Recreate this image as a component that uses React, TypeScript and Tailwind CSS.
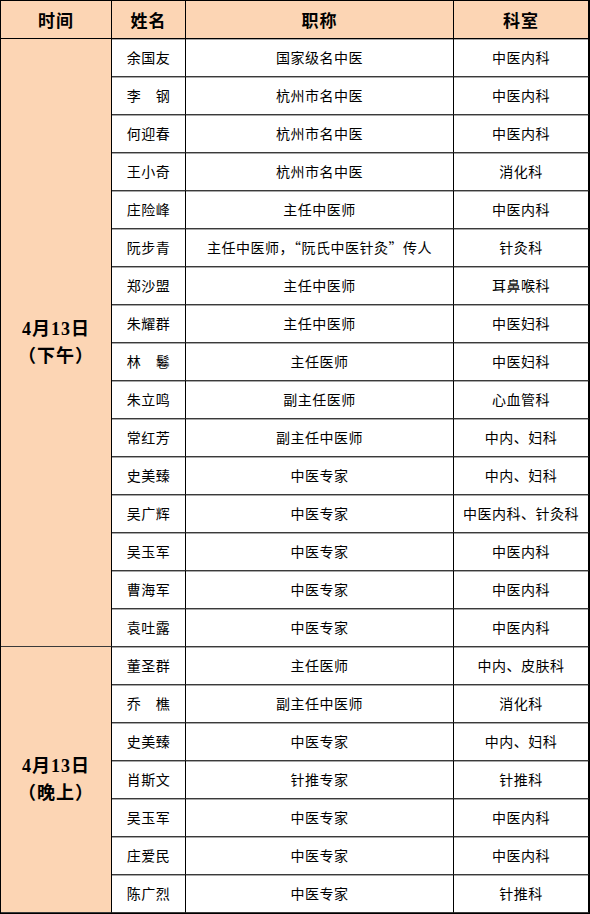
const afternoon = [
  ['余国友', '国家级名中医', '中医内科'],
  ['李　钢', '杭州市名中医', '中医内科'],
  ['何迎春', '杭州市名中医', '中医内科'],
  ['王小奇', '杭州市名中医', '消化科'],
  ['庄险峰', '主任中医师', '中医内科'],
  ['阮步青', '主任中医师，“阮氏中医针灸”传人', '针灸科'],
  ['郑沙盟', '主任中医师', '耳鼻喉科'],
  ['朱耀群', '主任中医师', '中医妇科'],
  ['林　鬈', '主任医师', '中医妇科'],
  ['朱立鸣', '副主任医师', '心血管科'],
  ['常红芳', '副主任中医师', '中内、妇科'],
  ['史美臻', '中医专家', '中内、妇科'],
  ['吴广辉', '中医专家', '中医内科、针灸科'],
  ['吴玉军', '中医专家', '中医内科'],
  ['曹海军', '中医专家', '中医内科'],
  ['袁吐露', '中医专家', '中医内科'],
];

const evening = [
  ['董圣群', '主任医师', '中内、皮肤科'],
  ['乔　樵', '副主任中医师', '消化科'],
  ['史美臻', '中医专家', '中内、妇科'],
  ['肖斯文', '针推专家', '针推科'],
  ['吴玉军', '中医专家', '中医内科'],
  ['庄爱民', '中医专家', '中医内科'],
  ['陈广烈', '中医专家', '针推科'],
];

const cell =
  'flex items-center justify-center bg-white border-r border-b border-black border-b-[#3a3a3a] shadow-[inset_0_1px_0_#a8a8a8] text-[14px] tracking-[0.5px] text-black';

function TimeCell({ label, sub, span }: { label: string; sub: string; span: string }) {
  return (
    <div
      className={`${span} flex flex-col items-center justify-center bg-[#fcd5b4] border-r border-b border-black border-b-[#3a3a3a] font-bold text-[18px] tracking-[1px] leading-[27px] text-black`}
      style={{ fontFamily: '"Liberation Serif", "Noto Sans CJK SC", serif' }}
    >
      <div>{label}</div>
      <div>{sub}</div>
    </div>
  );
}

function Rows({ rows }: { rows: string[][] }) {
  return (
    <>
      {rows.map((r, i) => (
        <div key={i} className="contents">
          <div className={cell}>{r[0]}</div>
          <div className={cell}>{r[1]}</div>
          <div className={cell}>{r[2]}</div>
        </div>
      ))}
    </>
  );
}

export default function App() {
  const head =
    'flex items-center justify-center bg-[#fcd5b4] border-r border-b border-black font-bold text-[17px] tracking-[1px] text-black';
  return (
    <div
      className="w-[590px] h-[914px] bg-white"
      style={{ fontFamily: '"Noto Sans CJK SC", sans-serif' }}
    >
      <div className="grid grid-cols-[111px_74px_268px_135px] auto-rows-[38px] w-[590px] border-l border-t border-black border-r-2 border-b-2 border-r-black border-b-black">
        <div className={head}>时间</div>
        <div className={head}>姓名</div>
        <div className={head}>职称</div>
        <div className={head}>科室</div>
        <TimeCell label="4月13日" sub="（下午）" span="row-[span_16/span_16]" />
        <Rows rows={afternoon} />
        <TimeCell label="4月13日" sub="（晚上）" span="row-[span_7/span_7]" />
        <Rows rows={evening} />
      </div>
    </div>
  );
}
